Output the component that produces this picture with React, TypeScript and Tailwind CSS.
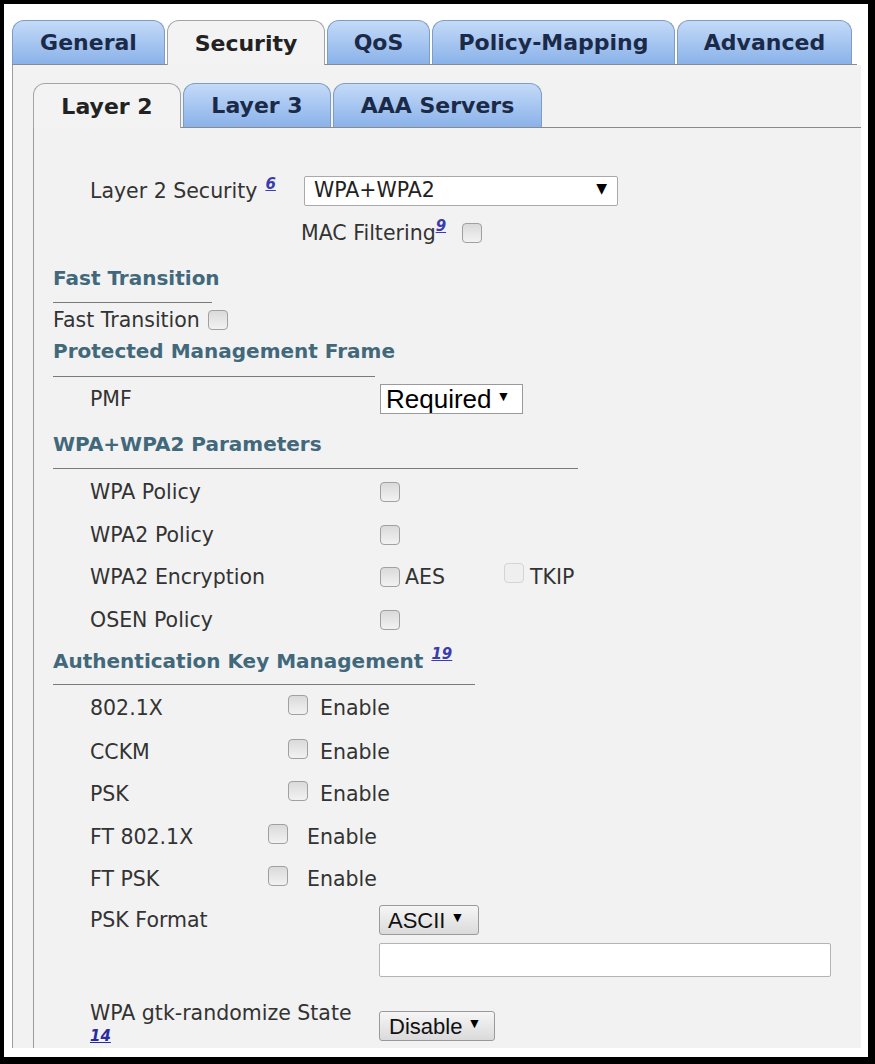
import React from "react";

const body = "font-['DejaVu_Sans',Verdana,sans-serif]";
const arial = "font-['Liberation_Sans',Arial,sans-serif]";

function Tab({ label, width, active }: { label: string; width: string; active?: boolean }) {
  return (
    <div
      className={`${width} flex items-center justify-center rounded-t-[12px] border border-b-0 text-[22px] font-bold ${body} ${
        active
          ? "h-[45px] -mb-px bg-[#f3f3f3] border-[#a4a4a4] text-[#222]"
          : "h-[44px] bg-linear-to-b from-[#c4daf8] to-[#8ab2e9] border-[#7f9cc2] text-[#1b2a48]"
      }`}
    >
      {label}
    </div>
  );
}

function Checkbox({ faint }: { faint?: boolean }) {
  return (
    <div
      className={`w-[20px] h-[20px] rounded-[4px] border shrink-0 ${
        faint
          ? "border-[#d4d4d4] bg-[#efefef]"
          : "border-[#a0a0a0] bg-linear-to-b from-[#dadada] to-[#f2f2f2]"
      }`}
    />
  );
}

function Sup({ n }: { n: string }) {
  return (
    <sup className="text-[15px] font-bold italic underline text-[#3b3bb0] ml-[8px] top-[-0.6em]">
      {n}
    </sup>
  );
}

function Header({ children, width, pt, pb }: { children: React.ReactNode; width: string; pt: string; pb: string }) {
  return (
    <div className={`${width} ${pt} ${pb} border-b border-[#7a7a7a]`}>
      <div className="leading-[28px] text-[20px] font-bold text-[#41687b] whitespace-nowrap">{children}</div>
    </div>
  );
}

function Row({ h, label, labelW, children }: { h: string; label: string; labelW: string; children: React.ReactNode }) {
  return (
    <div className={`${h} flex items-center pl-[37px]`}>
      <div className={`${labelW} shrink-0 leading-[28px] whitespace-nowrap`}>{label}</div>
      {children}
    </div>
  );
}

function Select({ text, cls }: { text: string; cls: string }) {
  return (
    <div className={`flex items-center ${cls}`}>
      <span>{text}</span>
      <span className="text-[14px] ml-[5px] -mt-[5px] text-black">▼</span>
    </div>
  );
}

export default function App() {
  return (
    <div className="w-[875px] h-[1064px] bg-black pl-[4px] pt-[4px] pr-[7px] pb-[7px]">
      <div className="h-full bg-white pl-[8px] pr-[7px] pt-[16px] pb-[9px] flex flex-col">
        {/* top tabs */}
        <div className="flex items-end gap-[2px] h-[45px] border-b border-[#8a8a8a] mr-[4px]">
          <Tab label="General" width="w-[153px]" />
          <Tab label="Security" width="w-[158px]" active />
          <Tab label="QoS" width="w-[103px]" />
          <Tab label="Policy-Mapping" width="w-[243px]" />
          <Tab label="Advanced" width="w-[175px]" />
        </div>

        <div className="flex-1 bg-[#f2f2f2] border-l border-[#9c9c9c] pl-[20px] pt-[19px] flex flex-col">
          {/* sub tabs */}
          <div className="flex items-end gap-[2px] h-[44px] border-b border-[#8a8a8a]">
            <Tab label="Layer 2" width="w-[148px]" active />
            <Tab label="Layer 3" width="w-[148px]" />
            <Tab label="AAA Servers" width="w-[209px]" />
          </div>

          <div className={`flex-1 border-l border-[#9c9c9c] pl-[19px] text-[20.5px] text-[#333] ${body}`}>
            <div className="h-[42px]" />
            <div className="h-[41px] flex items-center pl-[37px]">
              <div className="w-[214px] shrink-0 leading-[28px] whitespace-nowrap">
                Layer 2 Security
                <Sup n="6" />
              </div>
              <Select
                text="WPA+WPA2"
                cls="w-[314px] h-[30px] bg-white border border-[#a9a9a9] rounded-[2px] pl-[9px] pr-[10px] justify-between text-[#222]"
              />
            </div>
            <div className="h-[44px] flex items-center pl-[248px]">
              <span className="leading-[28px] whitespace-nowrap">
                MAC Filtering
                <sup className="text-[15px] font-bold italic underline text-[#3b3bb0] top-[-0.6em]">9</sup>
              </span>
              <div className="ml-[16px]">
                <Checkbox />
              </div>
            </div>

            <Header width="w-[159px]" pt="pt-[9px]" pb="pb-[10px]">
              Fast Transition
            </Header>
            <div className="h-[34px] flex items-center">
              <span className="leading-[28px]">Fast Transition</span>
              <div className="ml-[8px]">
                <Checkbox />
              </div>
            </div>

            <Header width="w-[322px]" pt="pt-0" pb="pb-[11px]">
              Protected Management Frame
            </Header>
            <Row h="h-[44px]" label="PMF" labelW="w-[290px]">
              <Select
                text="Required"
                cls={`w-[143px] h-[30px] bg-white border border-[#9a9a9a] pl-[5px] text-[26px] text-black ${arial}`}
              />
            </Row>

            <Header width="w-[525px]" pt="pt-[9px]" pb="pb-[10px]">
              WPA+WPA2 Parameters
            </Header>
            <Row h="h-[45px]" label="WPA Policy" labelW="w-[290px]">
              <Checkbox />
            </Row>
            <Row h="h-[41px]" label="WPA2 Policy" labelW="w-[290px]">
              <Checkbox />
            </Row>
            <Row h="h-[43px]" label="WPA2 Encryption" labelW="w-[290px]">
              <Checkbox />
              <span className="ml-[5px] w-[99px] leading-[28px]">AES</span>
              <div className="-mt-[8px]">
                <Checkbox faint />
              </div>
              <span className="ml-[6px] leading-[28px]">TKIP</span>
            </Row>
            <Row h="h-[43px]" label="OSEN Policy" labelW="w-[290px]">
              <Checkbox />
            </Row>

            <Header width="w-[422px]" pt="pt-[6px]" pb="pb-[9px]">
              Authentication Key Management
              <Sup n="19" />
            </Header>
            {[
              { label: "802.1X", h: "h-[46px]", w: "w-[198px]", gap: "ml-[12px]" },
              { label: "CCKM", h: "h-[41px]", w: "w-[198px]", gap: "ml-[12px]" },
              { label: "PSK", h: "h-[43px]", w: "w-[198px]", gap: "ml-[12px]" },
              { label: "FT 802.1X", h: "h-[43px]", w: "w-[178px]", gap: "ml-[19px]" },
              { label: "FT PSK", h: "h-[42px]", w: "w-[178px]", gap: "ml-[19px]" },
            ].map((r) => (
              <Row key={r.label} h={r.h} label={r.label} labelW={r.w}>
                <div className="-mt-[6px]">
                  <Checkbox />
                </div>
                <span className={`${r.gap} leading-[28px]`}>Enable</span>
              </Row>
            ))}

            <Row h="h-[40px]" label="PSK Format" labelW="w-[289px]">
              <Select
                text="ASCII"
                cls={`w-[100px] h-[30px] bg-linear-to-b from-[#f6f6f6] to-[#dadada] border border-[#9a9a9a] rounded-[3px] pl-[8px] text-[22px] text-[#111] ${arial}`}
              />
            </Row>
            <div className="h-[40px] pl-[326px] pt-[3px]">
              <div className="w-[452px] h-[34px] bg-white border border-[#b4b4b4] rounded-[2px]" />
            </div>

            <div className="flex pl-[37px]">
              <div className="w-[289px] shrink-0 pt-[19px]">
                <div className="leading-[28px] whitespace-nowrap">WPA gtk-randomize State</div>
                <div className="leading-[18px] text-[15px] font-bold italic underline text-[#2b2ba0]">14</div>
              </div>
              <div className="pt-[31px]">
                <Select
                  text="Disable"
                  cls={`w-[116px] h-[30px] bg-linear-to-b from-[#f6f6f6] to-[#dadada] border border-[#9a9a9a] rounded-[3px] pl-[9px] text-[22px] text-[#111] ${arial}`}
                />
              </div>
            </div>
          </div>
        </div>
      </div>
    </div>
  );
}
